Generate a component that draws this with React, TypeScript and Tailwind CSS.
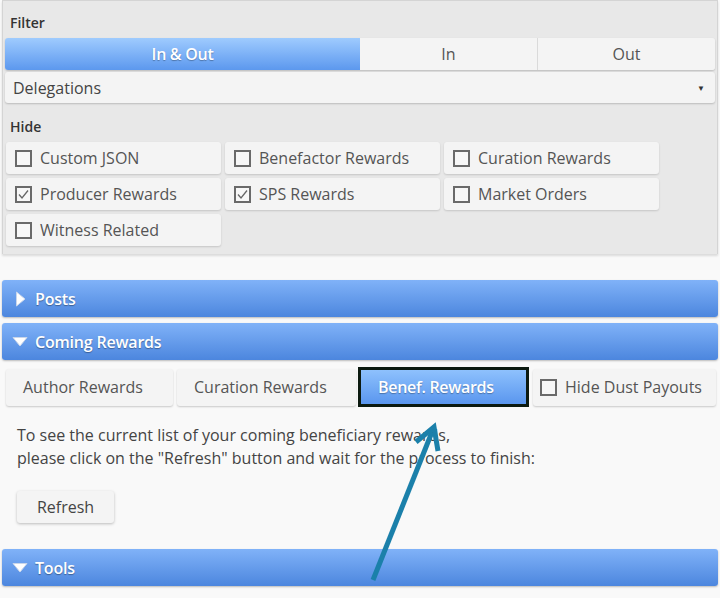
import React from 'react';

const hideOptions = [
  { label: 'Custom JSON', checked: false },
  { label: 'Benefactor Rewards', checked: false },
  { label: 'Curation Rewards', checked: false },
  { label: 'Producer Rewards', checked: true },
  { label: 'SPS Rewards', checked: true },
  { label: 'Market Orders', checked: false },
  { label: 'Witness Related', checked: false },
];

const Box = ({ checked }: { checked: boolean }) => (
  <span className="flex h-[17px] w-[17px] shrink-0 items-center justify-center border-2 border-[#6a6a6a] bg-[#f7f7f7]">
    {checked && (
      <svg width="13" height="13" viewBox="0 0 13 13">
        <path d="M2 6.5 L5 10 L11 2.5" fill="none" stroke="#666" strokeWidth="1.3" />
      </svg>
    )}
  </span>
);

const SectionHeader = ({ title, open }: { title: string; open: boolean }) => (
  <div className="flex h-[37px] items-center gap-[7px] rounded-[3px] bg-linear-to-b from-[#80b2f8] to-[#4c86de] pl-[10px] shadow-[0_1px_2px_rgba(0,0,0,0.25)]">
    <span className="flex w-[16px] justify-center">
      {open ? (
        <svg width="16" height="11" viewBox="0 0 16 11">
          <path d="M1 1.5 L15 1.5 L8 10 Z" fill="#fff" stroke="#c9d6ea" strokeWidth="1" strokeLinejoin="round" />
        </svg>
      ) : (
        <svg width="11" height="16" viewBox="0 0 11 16">
          <path d="M1.5 1 L10 8 L1.5 15 Z" fill="#fff" stroke="#c9d6ea" strokeWidth="1" strokeLinejoin="round" />
        </svg>
      )}
    </span>
    <span className="text-[16px] font-semibold tracking-[-0.2px] text-white [text-shadow:0_1px_1px_rgba(0,0,0,0.35)]">{title}</span>
  </div>
);

const tabBtn =
  'flex h-[37px] items-center rounded-[3px] bg-[#f4f4f4] pl-[17px] text-[16px] text-[#555] shadow-[0_1px_2px_rgba(0,0,0,0.2)]';

export default function App() {
  return (
    <div className="relative h-[598px] w-[720px] overflow-hidden bg-[#f9f9f9] font-['Open_Sans',sans-serif] text-[#444]">
      {/* Filter panel */}
      <div className="mx-[2px] border-x border-t border-[#d4d4d4] bg-[#e8e8e8] px-[2px] pb-[8px] pt-[13px] shadow-[0_2px_2px_rgba(0,0,0,0.12)]">
        <div className="pl-[5px] text-[14px] font-semibold leading-[18px] text-[#333]">Filter</div>

        <div className="mt-[6px] flex h-[32px] overflow-hidden rounded-[3px] shadow-[0_1px_2px_rgba(0,0,0,0.2)]">
          <div className="flex w-[355px] items-center justify-center bg-linear-to-b from-[#9fcbfe] to-[#5c98ee] text-[16px] font-semibold tracking-[-0.3px] text-white [text-shadow:0_1px_1px_rgba(0,0,0,0.3)]">
            In &amp; Out
          </div>
          <div className="flex w-[178px] items-center justify-center border-r border-[#dadada] bg-[#f4f4f4] text-[16px] text-[#555]">
            In
          </div>
          <div className="flex flex-1 items-center justify-center bg-[#f4f4f4] text-[16px] text-[#555]">Out</div>
        </div>

        <div className="mt-[2px] flex h-[31px] items-center justify-between rounded-[3px] bg-[#f4f4f4] pl-[8px] pr-[10px] text-[16px] text-[#444] shadow-[0_1px_2px_rgba(0,0,0,0.2)]">
          <span>Delegations</span>
          <span className="text-[8px] text-[#333]">▼</span>
        </div>

        <div className="mt-[15px] pl-[5px] text-[14px] font-semibold leading-[18px] text-[#333]">Hide</div>

        <div className="mt-[6px] grid grid-cols-[215px_215px_215px] gap-[4px] pl-[1px]">
          {hideOptions.map((o) => (
            <div
              key={o.label}
              className="flex h-[32px] items-center gap-[8px] rounded-[3px] bg-[#f4f4f4] pl-[9px] text-[16px] text-[#555] shadow-[0_1px_2px_rgba(0,0,0,0.15)]"
            >
              <Box checked={o.checked} />
              <span>{o.label}</span>
            </div>
          ))}
        </div>
      </div>

      {/* Collapsible sections */}
      <div className="mt-[26px] flex flex-col gap-[6px] px-[2px]">
        <SectionHeader title="Posts" open={false} />
        <div>
          <SectionHeader title="Coming Rewards" open={true} />
          <div className="mt-[7px] flex h-[40px] items-center gap-[4px] pl-[4px] pr-[2px]">
            <div className={`${tabBtn} w-[167px]`}>Author Rewards</div>
            <div className={`${tabBtn} w-[179px]`}>Curation Rewards</div>
            <div className="-ml-[2px] flex h-[40px] w-[171px] border-[3px] border-[#0c1a10] bg-[#0c1a10]">
              <div className="flex flex-1 items-center bg-linear-to-b from-[#8ec1fd] to-[#5a96ee] pl-[17px] text-[16px] font-semibold tracking-[-0.3px] text-white [text-shadow:0_1px_1px_rgba(0,0,0,0.3)]">
                Benef. Rewards
              </div>
            </div>
            <div className="flex h-[37px] flex-1 items-center gap-[8px] rounded-[3px] bg-[#f4f4f4] pl-[7px] text-[16px] text-[#555] shadow-[0_1px_2px_rgba(0,0,0,0.2)]">
              <Box checked={false} />
              <span>Hide Dust Payouts</span>
            </div>
          </div>

          <div className="mt-[17px] pl-[15px] text-[16px] leading-[23px] text-[#444]">
            <p>To see the current list of your coming beneficiary rewards,</p>
            <p>please click on the "Refresh" button and wait for the process to finish:</p>
          </div>

          <button className="ml-[15px] mt-[21px] flex h-[32px] w-[97px] items-center justify-center rounded-[3px] bg-[#f4f4f4] text-[16px] text-[#444] shadow-[0_1px_3px_rgba(0,0,0,0.25)]">
            Refresh
          </button>
        </div>

        <div className="mt-[20px]">
          <SectionHeader title="Tools" open={true} />
        </div>
      </div>

      {/* annotation arrow */}
      <svg className="pointer-events-none absolute left-0 top-0" width="720" height="598">
        <line x1="373" y1="580" x2="432" y2="432" stroke="#1b80aa" strokeWidth="5" />
        <path d="M416 442 L434 427 L438 451" fill="none" stroke="#1b80aa" strokeWidth="5" strokeLinejoin="miter" />
      </svg>
    </div>
  );
}
